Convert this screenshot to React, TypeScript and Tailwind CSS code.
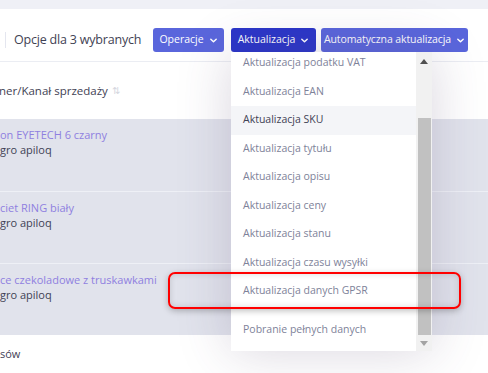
import React from "react";

const Chevron = ({ className = "" }: { className?: string }) => (
  <svg width="9" height="9" viewBox="0 0 10 10" className={className} fill="none">
    <path d="M2 3.5 L5 6.5 L8 3.5" stroke="currentColor" strokeWidth="1.6" strokeLinecap="round" strokeLinejoin="round" />
  </svg>
);

const items = [
  "Aktualizacja podatku VAT",
  "Aktualizacja EAN",
  "Aktualizacja SKU",
  "Aktualizacja tytułu",
  "Aktualizacja opisu",
  "Aktualizacja ceny",
  "Aktualizacja stanu",
  "Aktualizacja czasu wysyłki",
  "Aktualizacja danych GPSR",
];

const rows = [
  { name: "on EYETECH 6 czarny" },
  { name: "ciet RING biały" },
  { name: "ce czekoladowe z truskawkami" },
];

export default function App() {
  return (
    <div
      className="relative w-[488px] h-[373px] overflow-hidden bg-white text-[#3f4254]"
      style={{ fontFamily: '"Open Sans", "Liberation Sans", sans-serif' }}
    >
      <div className="h-[9px] bg-[#eff0f6]" />
      {/* header */}
      <div className="flex items-center h-[53px] pt-[10px] border-b border-[#ebedf3]">
        <div className="ml-[5px] w-px h-[16px] bg-[#e4e6ef]" />
        <div className="ml-[8px] w-[139px] text-[12.5px] tracking-[-0.2px]">Opcje dla 3 wybranych</div>
        <div className="flex">
          <button className="h-[24px] w-[71px] rounded-[3px] bg-[#5a66dc] text-white text-[10.5px] font-medium flex items-center justify-center gap-[5px]">
            Operacje <Chevron />
          </button>
          <button className="ml-[7px] h-[24px] w-[85px] rounded-[3px] bg-[#2b36c9] text-white text-[10.5px] font-medium flex items-center justify-center gap-[5px]">
            Aktualizacja <Chevron />
          </button>
          <button className="ml-[5px] h-[24px] w-[147px] rounded-[3px] bg-[#5a66dc] text-white text-[10.5px] font-medium tracking-[-0.1px] flex items-center justify-center gap-[5px]">
            Automatyczna aktualizacja <Chevron />
          </button>
        </div>
      </div>
      {/* column header */}
      <div className="h-[57px] flex items-center text-[11.5px]">
        <span className="-ml-[1px]">ner/Kanał sprzedaży</span>
        <span className="ml-[4px] text-[#d5d7e0] text-[10px]">⇅</span>
      </div>
      {/* rows */}
      {rows.map((r, i) => (
        <div
          key={i}
          className={`h-[72px] bg-[#e1e3ec] pt-[8px] pl-0 ${i > 0 ? "border-t border-[#eef0f6]" : ""}`}
        >
          <div className="text-[11px] text-[#8f7fe0] leading-[15px]">{r.name}</div>
          <div className="text-[11px] text-[#3f4254] leading-[15px]">gro apiloq</div>
        </div>
      ))}
      <div className="h-[39px] flex items-center text-[11px] text-[#3f4254]">sów</div>

      {/* dropdown */}
      <div className="absolute left-[231px] top-[52px] w-[201px] h-[299px] bg-white shadow-[0_0_50px_0_rgba(82,63,105,0.22)] overflow-hidden flex">
        <div className="flex-1 overflow-hidden">
          <div className="-mt-[3px]">
            {items.map((t, i) => (
              <div
                key={t}
                className={`h-[28.5px] flex items-center pl-[12px] text-[10.5px] ${
                  i === 2 ? "bg-[#f4f5f8] text-[#3f4254]" : "text-[#7e8299]"
                }`}
              >
                {t}
              </div>
            ))}
            <div className="h-[10px]" />
            <div className="h-[28.5px] flex items-center pl-[12px] text-[10.5px] text-[#7e8299]">
              Pobranie pełnych danych
            </div>
          </div>
        </div>
        <div className="w-[16px] h-full bg-[#f1f1f1] flex flex-col items-center">
          <div className="h-[16px] w-full flex items-center justify-center mt-[1px]">
            <svg width="8" height="5" viewBox="0 0 8 5"><path d="M0 5 L4 0 L8 5 Z" fill="#505050" /></svg>
          </div>
          <div className="mt-[49px] w-[13px] h-[217px] bg-[#c1c1c1]" />
          <div className="h-[16px] w-full flex items-center justify-center">
            <svg width="8" height="5" viewBox="0 0 8 5"><path d="M0 0 L4 5 L8 0 Z" fill="#a3a3a3" /></svg>
          </div>
        </div>
      </div>

      {/* red highlight annotation */}
      <div className="absolute left-[168px] top-[272px] w-[293px] h-[37px] rounded-[7px] border-2 border-[#ff0000] shadow-[0_2px_6px_rgba(0,0,0,0.25),inset_0_0_6px_rgba(0,0,0,0.15)]" />
    </div>
  );
}
